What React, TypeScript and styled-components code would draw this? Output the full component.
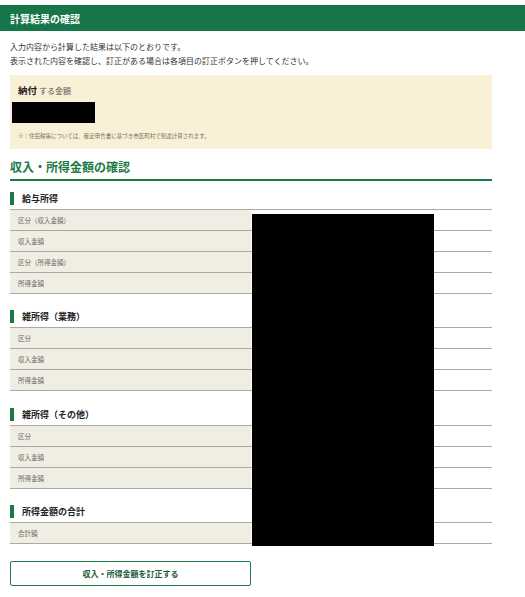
import React from "react";
import styled, { createGlobalStyle } from "styled-components";

const incomeSections = [
  { id: "salary", title: "給与所得", rows: ["区分（収入金額）", "収入金額", "区分（所得金額）", "所得金額"] },
  { id: "business", title: "雑所得（業務）", rows: ["区分", "収入金額", "所得金額"] },
  { id: "other", title: "雑所得（その他）", rows: ["区分", "収入金額", "所得金額"] },
  { id: "total", title: "所得金額の合計", rows: ["合計額"] },
];

const GlobalStyle = createGlobalStyle`
  body {
    margin: 0;
    background: #fff;
    font-family: "Noto Sans CJK JP", "Noto Sans", sans-serif;
    color: #333;
  }
`;

const Page = styled.div`
  padding-top: 5px;
  width: 525px;
`;

const PageHeader = styled.h1`
  margin: 0;
  height: 26px;
  padding-left: 10px;
  display: flex;
  align-items: center;
  background: #17754a;
  color: #fff;
  font-size: 10px;
  font-weight: bold;
`;

const Content = styled.div`
  padding: 0 33px 0 10px;
`;

const Intro = styled.p`
  margin: 9px 0 0;
  font-size: 8px;
  line-height: 14px;
  color: #333;
`;

const PaymentBox = styled.div`
  margin-top: 7px;
  padding: 8px 8px 9px;
  background: #faf0d7;
`;

const PaymentLabel = styled.div`
  font-size: 9.5px;
  line-height: 14px;
  font-weight: bold;
  color: #222;

  span {
    font-size: 8px;
    font-weight: normal;
    color: #555;
    margin-left: 2px;
  }
`;

const Redacted = styled.div<{ $w: number; $h: number }>`
  width: ${(p) => p.$w}px;
  height: ${(p) => p.$h}px;
  background: #000;
`;

const PaymentAmount = styled(Redacted)`
  margin: 4px 0 0 -6px;
`;

const Note = styled.p`
  margin: 9px 0 0;
  font-size: 5.5px;
  line-height: 8px;
  color: #7a6f5a;
`;

const SectionTitle = styled.h2`
  margin: 10px 0 0;
  padding-bottom: 4px;
  border-bottom: 2px solid #1b7a45;
  font-size: 12px;
  line-height: 16px;
  font-weight: bold;
  color: #1d7a45;
`;

const IncomeList = styled.div`
  position: relative;
  padding-top: 10.5px;
`;

const IncomeSection = styled.section`
  & + & {
    margin-top: 16.5px;
  }
`;

const SubTitle = styled.h3`
  margin: 0 0 4px;
  height: 13px;
  padding-left: 8px;
  border-left: 4px solid #1a7a45;
  display: flex;
  align-items: center;
  font-size: 9px;
  font-weight: bold;
  color: #222;
  box-sizing: border-box;
`;

const Table = styled.div`
  border-top: 1px solid #aaa;
`;

const Row = styled.div`
  display: grid;
  grid-template-columns: 1fr 1fr;
  height: 20px;
  border-bottom: 1px solid #aaa;
`;

const LabelCell = styled.div`
  display: flex;
  align-items: center;
  padding-left: 8px;
  background: #f0ede3;
  font-size: 6.5px;
  color: #666;
`;

const ValueCell = styled.div`
  background: #fff;
`;

const ValuesMask = styled(Redacted)`
  position: absolute;
  top: 33px;
  left: 242px;
`;

const CorrectButton = styled.button`
  display: block;
  margin-top: 17px;
  width: 241px;
  height: 25px;
  padding: 0;
  border: 1px solid #1b7a45;
  border-radius: 2px;
  background: #fff;
  font-family: inherit;
  font-size: 8px;
  font-weight: bold;
  color: #1e5b3a;
  cursor: pointer;
`;

const App: React.FC = () => {
  return (
    <Page>
      <GlobalStyle />
      <PageHeader>計算結果の確認</PageHeader>
      <Content>
        <Intro>
          入力内容から計算した結果は以下のとおりです。
          <br />
          表示された内容を確認し、訂正がある場合は各項目の訂正ボタンを押してください。
        </Intro>

        <PaymentBox>
          <PaymentLabel>
            納付<span>する金額</span>
          </PaymentLabel>
          <PaymentAmount $w={83} $h={21} />
          <Note>※：住民税等については、確定申告書に基づき市区町村で別途計算されます。</Note>
        </PaymentBox>

        <SectionTitle>収入・所得金額の確認</SectionTitle>
        <IncomeList>
          {incomeSections.map((section) => (
            <IncomeSection key={section.id}>
              <SubTitle>{section.title}</SubTitle>
              <Table>
                {section.rows.map((label) => (
                  <Row key={label}>
                    <LabelCell>{label}</LabelCell>
                    <ValueCell />
                  </Row>
                ))}
              </Table>
            </IncomeSection>
          ))}
          {/* values are blacked out in the screenshot */}
          <ValuesMask $w={182} $h={332} />
        </IncomeList>

        <CorrectButton>収入・所得金額を訂正する</CorrectButton>
      </Content>
    </Page>
  );
};

export default App;
